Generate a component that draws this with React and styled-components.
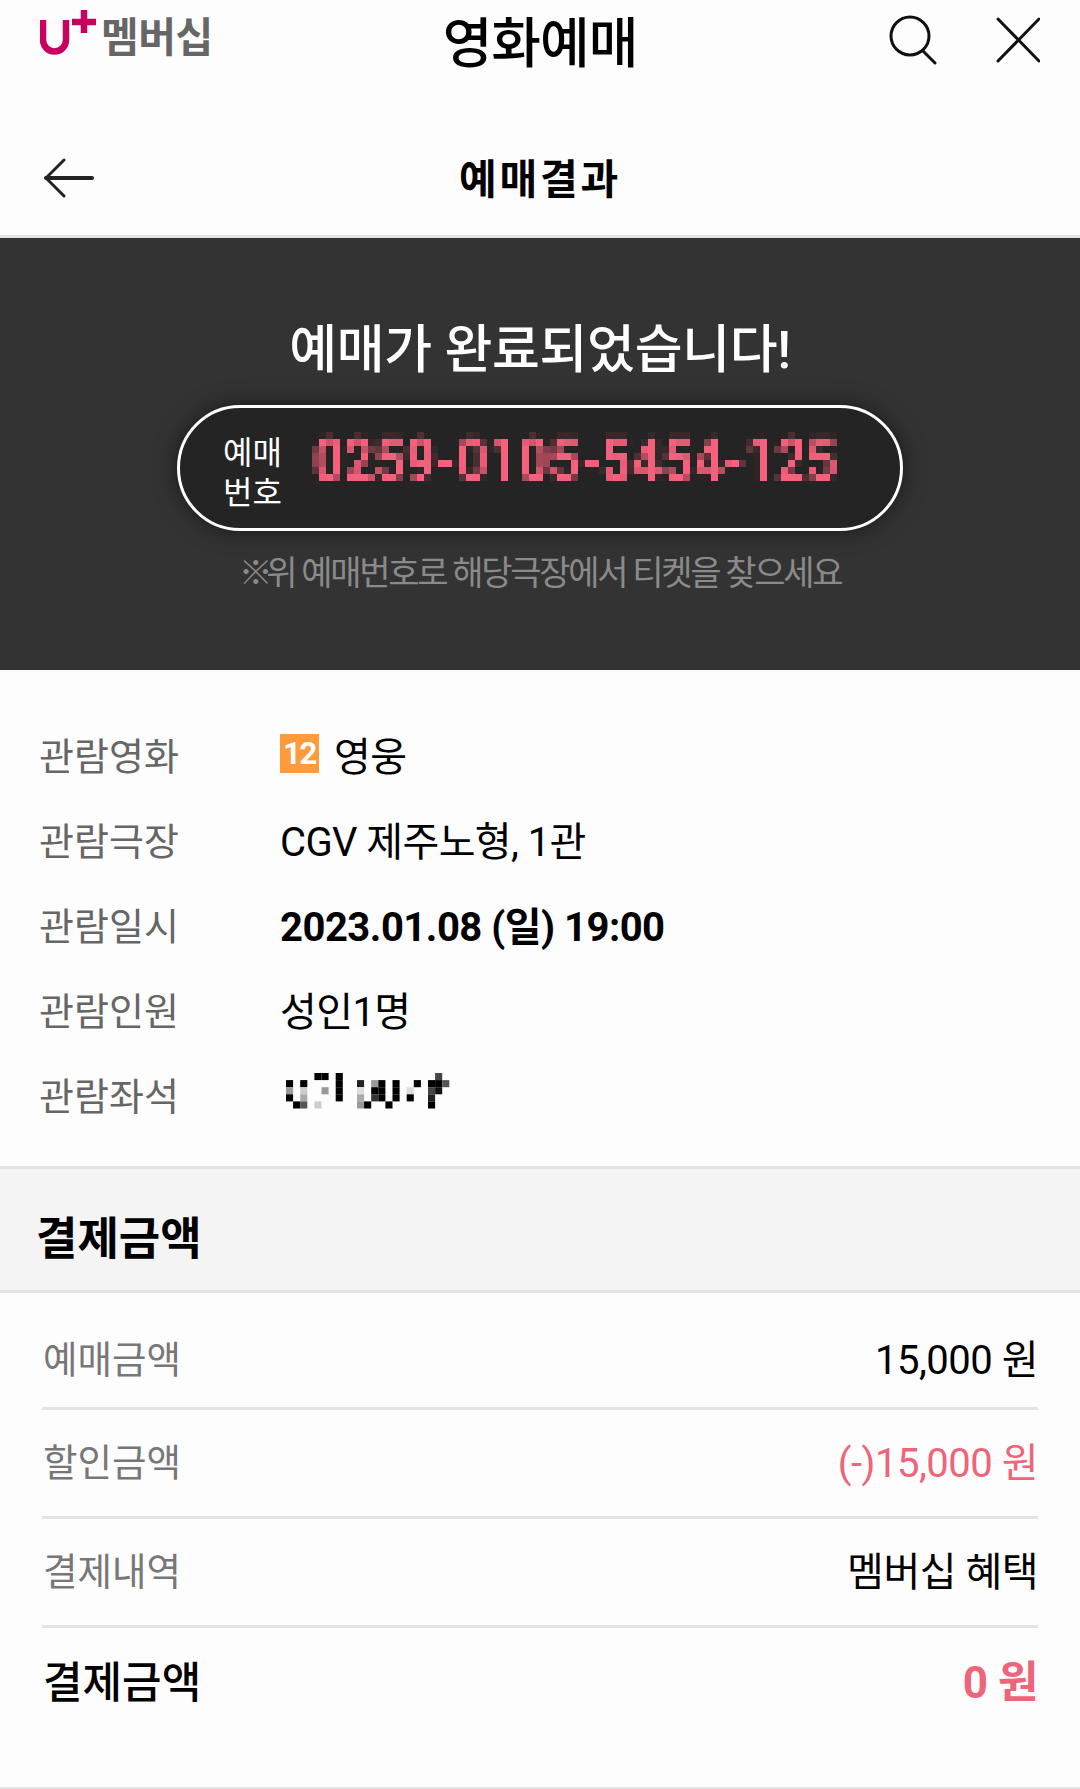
import React from 'react';
import styled, { createGlobalStyle } from 'styled-components';

const Global = createGlobalStyle`
  html, body { margin: 0; padding: 0; background: #fdfdfd; }
  body { font-family: Roboto, "Noto Sans CJK KR", sans-serif; color: #000; }
  * { box-sizing: border-box; }
`;

const Page = styled.div`
  width: 1080px;
  height: 1789px;
  overflow: hidden;
  background: #fdfdfd;
`;

const TopBar = styled.header`
  display: grid;
  grid-template-columns: 1fr auto 1fr;
  align-items: center;
  height: 84px;
  padding: 0 40px;
`;

const Logo = styled.div`
  display: flex;
  align-items: center;
  gap: 1px;
  height: 76px;
  margin-top: -8px;
`;

const LogoText = styled.span`
  font-size: 41px;
  font-weight: 700;
  letter-spacing: -0.5px;
  line-height: 1;
  color: #666;
`;

const AppTitle = styled.h1`
  margin: 0;
  padding-top: 6px;
  font-size: 54px;
  font-weight: 500;
  letter-spacing: -1px;
  line-height: 1;
`;

const TopIcons = styled.div`
  display: flex;
  justify-content: flex-end;
  align-items: center;
  gap: 59px;
  margin-top: -5px;
`;

const SubBar = styled.div`
  display: flex;
  align-items: center;
  justify-content: center;
  position: relative;
  height: 154px;
  padding-top: 41px;
  border-bottom: 3px solid #e4e4e4;
`;

const BackIcon = styled.svg`
  position: absolute;
  left: 44px;
  top: 74px;
`;

const SubTitle = styled.h2`
  margin: 0;
  font-size: 41px;
  font-weight: 700;
  letter-spacing: 2.8px;
  line-height: 1;
`;

const Panel = styled.section`
  display: flex;
  flex-direction: column;
  align-items: center;
  height: 432px;
  padding-top: 83px;
  background: #333;
`;

const Done = styled.div`
  font-size: 52px;
  font-weight: 500;
  letter-spacing: -0.3px;
  line-height: 60px;
  color: #fff;
`;

const Pill = styled.div`
  display: flex;
  align-items: center;
  width: 726px;
  height: 126px;
  margin-top: 24px;
  padding-left: 43px;
  border: 3px solid #fff;
  border-radius: 63px;
  background: #242424;
  box-shadow: 0 0 22px rgba(0, 0, 0, 0.55);
`;

const PillLabel = styled.div`
  width: 90px;
  padding-top: 10px;
  font-size: 32px;
  line-height: 40px;
  color: #fff;
`;

const Mosaic = styled.div`
  filter: url(#pixelate);
  width: 560px;
  height: 70px;
  margin: 0 0 16px -8px;
  padding-left: 8px;
`;

const Ticket = styled.div`
  font-size: 62px;
  font-weight: 700;
  line-height: 70px;
  color: #f7607c;
  white-space: nowrap;
  transform: scaleX(0.864);
  transform-origin: left center;
`;

const Note = styled.div`
  margin-top: 22px;
  font-size: 34px;
  letter-spacing: -2.3px;
  line-height: 40px;
  color: #8a8a8a;
`;

const NoteMark = styled.span`
  font-weight: 700;
  letter-spacing: -7.5px;
`;

const InfoList = styled.section`
  height: 496px;
  padding-top: 41px;
`;

const InfoRow = styled.div`
  display: grid;
  grid-template-columns: 241px 1fr;
  align-items: center;
  height: 85px;
  padding-left: 39px;
`;

const InfoLabel = styled.div`
  font-size: 38px;
  color: #666;
`;

const InfoValue = styled.div`
  display: flex;
  align-items: center;
  gap: 15px;
  font-size: 40px;
  font-weight: ${({ $bold }) => ($bold ? 700 : 400)};
  letter-spacing: ${({ $bold }) => ($bold ? '-0.5px' : '-0.6px')};
`;

const AgeBadge = styled.span`
  display: flex;
  align-items: center;
  justify-content: center;
  width: 39px;
  height: 39px;
  background: #ff9a3d;
  color: #fff;
  font-size: 31px;
  font-weight: 700;
  letter-spacing: -1.5px;
`;

const SectionHead = styled.div`
  display: flex;
  align-items: center;
  height: 127px;
  padding: 12px 0 0 36px;
  background: #f4f4f4;
  border-top: 3px solid #e4e4e4;
  border-bottom: 3px solid #e4e4e4;
  font-size: 45px;
  font-weight: 700;
`;

const PayList = styled.section`
  padding: 15px 42px 0;
`;

const PayRow = styled.div`
  display: flex;
  align-items: center;
  justify-content: space-between;
  height: ${({ $first }) => ($first ? '102px' : '109px')};
  padding: 0 0 ${({ $first }) => ($first ? '2px' : '7px')} 1px;
  border-bottom: ${({ $last }) => ($last ? 'none' : '3px solid #e4e4e4')};
`;

const PayLabel = styled.div`
  font-size: ${({ $strong }) => ($strong ? '43px' : '37.5px')};
  font-weight: ${({ $strong }) => ($strong ? 500 : 400)};
  color: ${({ $strong }) => ($strong ? '#000' : '#777')};
`;

const PayValue = styled.div`
  font-size: ${({ $strong }) => ($strong ? '44px' : '40px')};
  font-weight: ${({ $strong }) => ($strong ? 700 : 400)};
  letter-spacing: -0.5px;
  color: ${({ $pink }) => ($pink ? '#ee6478' : '#000')};
`;

const BottomLine = styled.div`
  height: 3px;
  margin-top: 50px;
  background: #e4e4e4;
`;

const SeatMosaic = styled.svg`
  display: block;
  margin-top: -6px;
  margin-left: 6px;
`;

// 좌석 모자이크: [row, col, color]
const seatCells = [
  [0, 4, '#000'], [0, 5, '#000'], [0, 7, '#000'], [0, 21, '#444'],
  [1, 0, '#000'], [1, 2, '#000'], [1, 7, '#000'], [1, 10, '#222'], [1, 12, '#999'], [1, 13, '#000'], [1, 15, '#000'], [1, 18, '#000'], [1, 20, '#000'], [1, 21, '#000'], [1, 22, '#555'],
  [2, 0, '#999'], [2, 2, '#ccc'], [2, 5, '#999'], [2, 7, '#000'], [2, 10, '#ddd'], [2, 12, '#000'], [2, 13, '#000'], [2, 15, '#000'], [2, 17, '#ddd'], [2, 20, '#444'], [2, 21, '#111'],
  [3, 0, '#000'], [3, 2, '#aaa'], [3, 7, '#000'], [3, 10, '#aaa'], [3, 12, '#333'], [3, 13, '#000'], [3, 15, '#000'], [3, 17, '#000'], [3, 20, '#222'],
  [4, 1, '#000'], [4, 2, '#555'], [4, 4, '#ccc'], [4, 10, '#999'], [4, 11, '#000'], [4, 14, '#000'], [4, 20, '#000'],
];

const UPlus = () => (
  <svg width="60" height="60" viewBox="40 8 60 60" fill="none" stroke="#c8005f" strokeWidth="6.5">
    <path d="M43 20 V40 a 11.5 11.5 0 0 0 23 0 V20" />
    <path d="M72 22 H96 M84 10 V33" />
  </svg>
);

const App = () => (
  <Page>
    <Global />
    <svg width="0" height="0" style={{ position: 'absolute' }}>
      <filter id="pixelate" x="0" y="0" width="100%" height="100%">
        <feGaussianBlur stdDeviation="0.9" result="soft" />
        <feFlood x="3" y="3" width="1" height="1" />
        <feComposite width="7" height="7" />
        <feTile result="grid" />
        <feComposite in="soft" in2="grid" operator="in" />
        <feMorphology operator="dilate" radius="3" />
      </filter>
    </svg>

    <TopBar>
      <Logo>
        <UPlus />
        <LogoText>멤버십</LogoText>
      </Logo>
      <AppTitle>영화예매</AppTitle>
      <TopIcons>
        <svg width="48" height="50" viewBox="0 0 48 50" fill="none" stroke="#111" strokeWidth="3" strokeLinecap="round">
          <circle cx="21" cy="21" r="19" />
          <path d="M34 36 L46 48" />
        </svg>
        <svg width="44" height="46" viewBox="0 0 44 46" fill="none" stroke="#111" strokeWidth="3" strokeLinecap="round">
          <path d="M2 2 L43 44 M43 2 L2 44" />
        </svg>
      </TopIcons>
    </TopBar>

    <SubBar>
      <BackIcon width="50" height="40" viewBox="0 0 50 40" fill="none" stroke="#222" strokeWidth="3" strokeLinecap="round">
        <path d="M20 2 L2 20 L20 38" />
        <path d="M2 20 H48" strokeWidth="4" />
      </BackIcon>
      <SubTitle>예매결과</SubTitle>
    </SubBar>

    <Panel>
      <Done>예매가 완료되었습니다!</Done>
      <Pill>
        <PillLabel>예매<br />번호</PillLabel>
        <Mosaic>
          <Ticket>0259-0105-5454-125</Ticket>
        </Mosaic>
      </Pill>
      <Note><NoteMark>※ </NoteMark>위 예매번호로 해당극장에서 티켓을 찾으세요</Note>
    </Panel>

    <InfoList>
      <InfoRow>
        <InfoLabel>관람영화</InfoLabel>
        <InfoValue><AgeBadge>12</AgeBadge>영웅</InfoValue>
      </InfoRow>
      <InfoRow>
        <InfoLabel>관람극장</InfoLabel>
        <InfoValue>CGV 제주노형, 1관</InfoValue>
      </InfoRow>
      <InfoRow>
        <InfoLabel>관람일시</InfoLabel>
        <InfoValue $bold>2023.01.08 (일) 19:00</InfoValue>
      </InfoRow>
      <InfoRow>
        <InfoLabel>관람인원</InfoLabel>
        <InfoValue>성인1명</InfoValue>
      </InfoRow>
      <InfoRow>
        <InfoLabel>관람좌석</InfoLabel>
        <SeatMosaic width="164" height="36" viewBox="0 0 164 36">
          {seatCells.map(([r, c, color]) => (
            <rect key={`${r}-${c}`} x={c * 7.1} y={r * 7.1} width="7.1" height="7.1" fill={color} />
          ))}
        </SeatMosaic>
      </InfoRow>
    </InfoList>

    <SectionHead>결제금액</SectionHead>

    <PayList>
      <PayRow $first>
        <PayLabel>예매금액</PayLabel>
        <PayValue>15,000 원</PayValue>
      </PayRow>
      <PayRow>
        <PayLabel>할인금액</PayLabel>
        <PayValue $pink>(-)15,000 원</PayValue>
      </PayRow>
      <PayRow>
        <PayLabel>결제내역</PayLabel>
        <PayValue>멤버십 혜택</PayValue>
      </PayRow>
      <PayRow $last>
        <PayLabel $strong>결제금액</PayLabel>
        <PayValue $strong $pink>0 원</PayValue>
      </PayRow>
    </PayList>
    <BottomLine />
  </Page>
);

export default App;
